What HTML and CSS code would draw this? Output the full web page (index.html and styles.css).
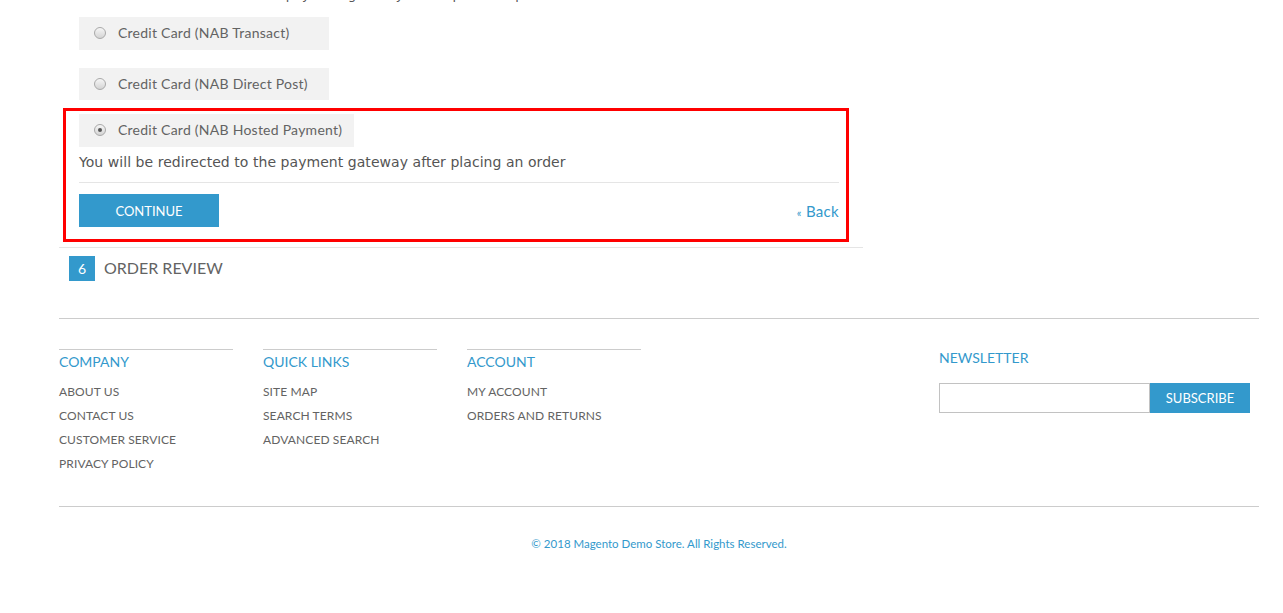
FILE: index.html
```html
<!DOCTYPE html>
<html>
<head>
<meta charset="utf-8">
<link rel="stylesheet" href="styles.css">
</head>
<body>
<div class="page">
  <main class="checkout">
    <div class="section">
      <p class="intro">Please select the most suitable payment gateway to complete the purchase</p>
      <div class="methods">
        <div class="option"><span class="radio"></span><span class="label">Credit Card (NAB Transact)</span></div>
        <div class="option"><span class="radio"></span><span class="label">Credit Card (NAB Direct Post)</span></div>
        <div class="highlight">
          <div class="option"><span class="radio checked"></span><span class="label">Credit Card (NAB Hosted Payment)</span></div>
          <p class="desc">You will be redirected to the payment gateway after placing an order</p>
          <div class="actions">
            <button class="btn">Continue</button>
            <a class="back" href="#"><span class="laquo">«</span> Back</a>
          </div>
        </div>
      </div>
    </div>
    <div class="step"><span class="num">6</span><span class="step-title">Order Review</span></div>
  </main>

  <footer class="footer">
    <div class="footer-cols">
      <div class="col">
        <h3 class="col-title">Company</h3>
        <ul class="links">
          <li>About Us</li><li>Contact Us</li><li>Customer Service</li><li>Privacy Policy</li>
        </ul>
      </div>
      <div class="col">
        <h3 class="col-title">Quick Links</h3>
        <ul class="links">
          <li>Site Map</li><li>Search Terms</li><li>Advanced Search</li>
        </ul>
      </div>
      <div class="col">
        <h3 class="col-title">Account</h3>
        <ul class="links">
          <li>My Account</li><li>Orders and Returns</li>
        </ul>
      </div>
      <div class="newsletter">
        <h3 class="nl-title">Newsletter</h3>
        <div class="nl-form"><input class="nl-input" type="text"><button class="nl-btn">Subscribe</button></div>
      </div>
    </div>
    <p class="copyright">© 2018 Magento Demo Store. All Rights Reserved.</p>
  </footer>
</div>
</body>
</html>
```

FILE: styles.css
```css
* { box-sizing: border-box; }
html, body { margin: 0; padding: 0; background: #fff; }
body { font-family: "Lato", "Open Sans", sans-serif; color: #636363; overflow: hidden; }

.page { width: 1200px; margin-left: 59px; }

.checkout { width: 804px; }
.section { border-bottom: 1px solid #e5e5e5; padding-bottom: 5px; }

.intro {
  margin: -14px 0 0 20px;
  height: 17px;
  font-family: "DejaVu Sans", Verdana, sans-serif;
  font-size: 13px;
  line-height: 17px;
  color: #555;
  white-space: nowrap;
}

.methods { padding-left: 20px; padding-top: 14px; }

.option {
  display: flex;
  align-items: center;
  width: max-content;
  min-width: 250px;
  height: 33px;
  padding: 0 12px 0 15px;
  background: #f2f2f2;
  margin-bottom: 18px;
  font-size: 14px;
  letter-spacing: 0.25px;
}
.methods > .option:nth-child(2) { height: 32px; margin-bottom: 8px; }
.highlight .option { margin-bottom: 0; }

.radio {
  width: 12px; height: 12px;
  border-radius: 50%;
  border: 1px solid #a9a9a9;
  background: linear-gradient(#f6f6f6, #d4d4d4);
  margin-right: 12px;
  margin-top: -1px;
  position: relative;
  flex: none;
}
.radio.checked::after {
  content: "";
  position: absolute;
  left: 3px; top: 3px;
  width: 4px; height: 4px;
  border-radius: 50%;
  background: #555;
}
.label { color: #636363; margin-top: -2px; }

.highlight {
  margin-left: -16px;
  width: 786px;
  border: 3px solid #ff0000;
  padding: 3px 7px 12px 13px;
}

.desc {
  margin: 6px 0 0 0;
  font-family: "DejaVu Sans", Verdana, sans-serif;
  font-size: 14px;
  letter-spacing: 0.05px;
  line-height: 18px;
  color: #555;
  padding-bottom: 11px;
  border-bottom: 1px solid #e5e5e5;
}

.actions {
  display: flex;
  justify-content: space-between;
  align-items: flex-end;
  margin-top: 11px;
  padding-right: 0;
}
.btn {
  width: 140px; height: 33px;
  background: #3399cc;
  border: 0;
  color: #fff;
  font-family: "Lato", sans-serif;
  font-size: 13px;
  text-transform: uppercase;
  padding: 0;
}
.back {
  color: #3399cc;
  text-decoration: none;
  font-family: "Lato", sans-serif;
  font-size: 15px;
  letter-spacing: 0.3px;
  line-height: 18px;
  margin-bottom: 5px;
}
.laquo { font-size: 11px; color: #3399cc; }

.step { display: flex; align-items: center; padding: 8px 0 0 10px; }
.num {
  width: 26px; height: 25px;
  background: #3399cc;
  color: #fff;
  font-size: 14px;
  display: flex; align-items: center; justify-content: center;
}
.step-title { margin-left: 9px; font-size: 16px; text-transform: uppercase; color: #636363; margin-top: -3px; }

.footer { margin-top: 37px; border-top: 1px solid #cccccc; }
.footer-cols { display: flex; padding-top: 30px; height: 187px; }
.col { width: 174px; margin-right: 30px; border-top: 1px solid #cccccc; align-self: flex-start; }
.col-title {
  margin: 3px 0 0 0;
  font-size: 14px; font-weight: normal;
  line-height: 18px;
  color: #3399cc;
  text-transform: uppercase;
}
.links { list-style: none; margin: 9px 0 0 0; padding: 0; }
.links li { font-size: 12px; line-height: 24px; text-transform: uppercase; color: #636363; letter-spacing: 0.1px; }

.newsletter { margin-left: auto; width: 311px; margin-right: 9px; margin-top: 0; }
.nl-title {
  margin: 0;
  font-size: 14px; font-weight: normal; line-height: 18px;
  color: #3399cc; text-transform: uppercase;
}
.nl-form { display: flex; margin-top: 16px; }
.nl-input { width: 211px; height: 30px; border: 1px solid #c2c2c2; margin: 0; }
.nl-btn {
  width: 100px; height: 30px; border: 0; margin: 0;
  background: #3399cc; color: #fff;
  font-family: "Lato", sans-serif; font-size: 13px; text-transform: uppercase;
}

.copyright {
  margin: 0;
  border-top: 1px solid #cccccc;
  padding-top: 30px;
  text-align: center;
  font-size: 11.5px;
  line-height: 14px;
  color: #3399cc;
}
```
